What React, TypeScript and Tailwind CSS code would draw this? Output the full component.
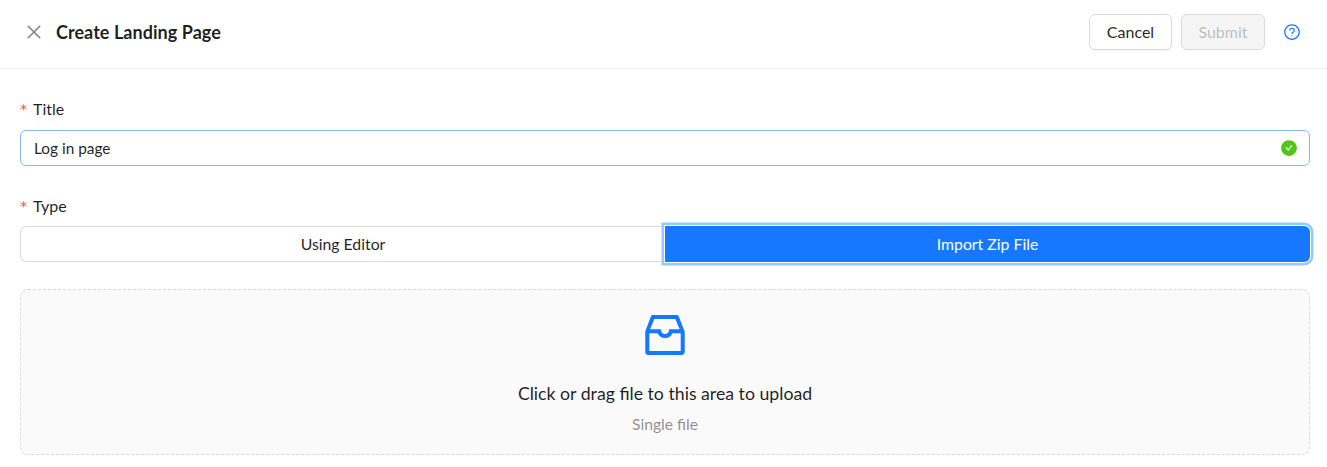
import { AiOutlineClose, AiOutlineQuestionCircle, AiFillCheckCircle, AiOutlineInbox } from 'react-icons/ai';

function FieldLabel({ children }: { children: string }) {
  return (
    <label className="flex h-[22px] items-center text-[16px] text-[#000000e0]">
      <span className="mr-[5px] w-[8px] font-['DejaVu_Sans',sans-serif] text-[14px] leading-none text-[#ff4d4f]">*</span>
      {children}
    </label>
  );
}

export default function App() {
  return (
    <div className="h-[467px] overflow-hidden bg-white font-['Lato',sans-serif]">
      {/* Header */}
      <header className="flex h-[69px] items-center justify-between border-b border-[#f0f0f0] pr-[26px] pb-[4px] pl-[24px]">
        <div className="flex items-center gap-[12px]">
          <AiOutlineClose className="text-[20px] text-[#00000073]" />
          <h1 className="text-[18px] font-bold tracking-[0.05px] text-[#000000e0]">Create Landing Page</h1>
        </div>
        <div className="flex items-center">
          <button className="h-[36px] w-[83px] rounded-[6px] border border-[#d9d9d9] bg-white text-[16px] text-[#000000e0] shadow-[0_2px_0_rgba(0,0,0,0.02)]">
            Cancel
          </button>
          <button className="ml-[9px] h-[36px] w-[84px] rounded-[6px] border border-[#d9d9d9] bg-[#0000000a] text-[16px] text-[#00000040]">
            Submit
          </button>
          <AiOutlineQuestionCircle className="ml-[18px] text-[18px] text-[#1677ff]" />
        </div>
      </header>

      {/* Form */}
      <main className="pt-[29px] pr-[17px] pl-[20px]">
        <FieldLabel>Title</FieldLabel>
        <div className="mt-[10px] flex h-[36px] items-center justify-between rounded-[6px] border border-[#85b6f0] pr-[11px] pl-[13px] text-[15.4px] text-[#000000e0]">
          <span className="pt-[1px]">Log in page</span>
          <AiFillCheckCircle className="text-[18px] text-[#52c41a]" />
        </div>

        <div className="mt-[29px]">
          <FieldLabel>Type</FieldLabel>
        </div>
        <div className="mt-[9px] flex h-[36px] text-[15.8px]">
          <div className="flex w-1/2 items-center justify-center rounded-l-[6px] border border-r-0 border-[#d9d9d9] bg-white text-[#000000e0]">
            Using Editor
          </div>
          <div className="flex w-1/2 items-center justify-center rounded-r-[6px] bg-[#1677ff] text-white shadow-[0_0_0_1px_#ffffff,0_0_0_3.5px_#91caff]">
            Import Zip File
          </div>
        </div>

        {/* Upload area */}
        <div className="mt-[27px] flex h-[166px] flex-col items-center rounded-[8px] border border-dashed border-[#d9d9d9] bg-[#fafafa] pt-[18px]">
          <AiOutlineInbox className="text-[54px] text-[#1677ff]" />
          <p className="mt-[20px] text-[17.7px] leading-[24px] text-[#000000e0]">
            Click or drag file to this area to upload
          </p>
          <p className="mt-[7px] text-[15.7px] leading-[22px] text-[#00000073]">Single file</p>
        </div>
      </main>
    </div>
  );
}
